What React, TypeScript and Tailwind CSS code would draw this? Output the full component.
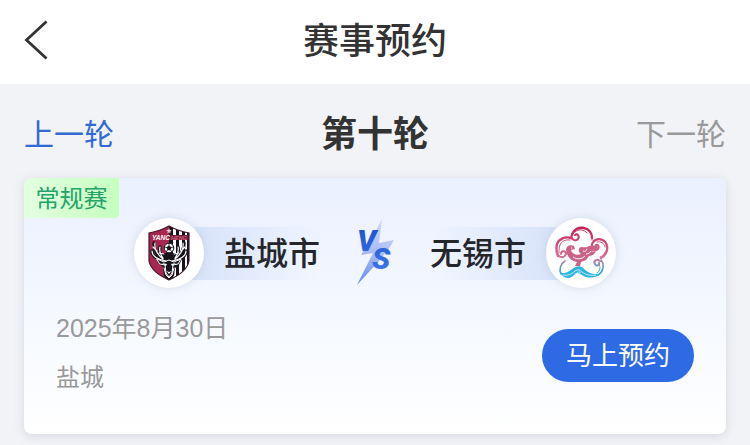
import type { ReactNode } from "react";

function BackIcon() {
  return (
    <svg width="24" height="40" viewBox="0 0 24 40" fill="none" aria-hidden="true">
      <path d="M22.5 1.5 2.5 20l20 18.500" stroke="#333" strokeWidth="2.8" />
    </svg>
  );
}

function YanchengLogo() {
  return (
    <svg width="42" height="56" viewBox="0 0 42 56" role="img" aria-label="盐城市队徽">
      <defs>
        <clipPath id="shield">
          <path d="M1 8Q12 6 21 1q9 5 20 7v28q-2 11-20 19Q3 47 1 36Z" />
        </clipPath>
      </defs>
      <g clipPath="url(#shield)">
        <path fill="#a82750" d="M0 0h21v56H0z" />
        <path fill="#17131a" d="M21 0h21v56H21z" />
        <path fill="#fff" d="M25 3h3v50h-3zM31 5h3v46h-3zM37 7h2v38h-2z" />
        <path fill="#17131a" d="M8 32 12 28h18l5 4-4 8-4 3-1 8-5 5-5-5-1-9-5-4z" />
        <path fill="#6d1c3a" d="M22 10h20v5H22z" />
      </g>
      <path d="M1 8Q12 6 21 1q9 5 20 7v28q-2 11-20 19Q3 47 1 36Z" fill="none" stroke="#42172a" strokeWidth="1.2" />
      <path d="m21 3 .8 2 2.100.1-1.700 1.300.6 2-1.800-1.200-1.800 1.200.6-2L18 5.100l2.200-.1Z" fill="#f7cbd4" />
      <text x="4" y="14.500" fontSize="6.500" fontWeight="700" fontStyle="italic" fontFamily="Liberation Sans, sans-serif" fill="#fff">YANC</text>
      <text x="23" y="14.500" fontSize="5.500" fontWeight="700" fontStyle="italic" fontFamily="Liberation Sans, sans-serif" fill="#d5637f">HENG</text>
      <g fill="none" strokeLinecap="round" strokeLinejoin="round">
        <g stroke="#17131a" strokeWidth="3.400">
          <path d="M17 35C10 34 4 31 4 26M14 34c-5-4-8-9-8-16M14 34c-2-4-3-7-2-12M25 35c7-1 13-4 13-9M28 34c5-4 8-9 8-16M28 34c2-4 3-7 2-12" />
        </g>
        <g stroke="#fff" strokeWidth="1.200">
          <path d="M18 36C10 35 4 31 4 26M15 34c-5-4-9-9-8-16M15 33c-3-4-4-7-3-11M9 26l-4-4M11 28l5 1M24 36c8-1 14-5 14-10M27 34c5-4 9-9 8-16M27 33c3-4 4-7 3-11M33 26l4-4M31 28l-5 1" />
          <path strokeWidth="1" d="m9 34 7 3 5-2 5 2 7-3-3 5-5 1-1 8-3 4-3-4-1-8-5-1Z" />
          <path strokeWidth="1" d="m16 43 2 7 3 3 3-3 2-7" />
        </g>
      </g>
      <circle cx="21" cy="23" r="4.800" fill="#fff" stroke="#17131a" />
      <path d="m21 20.500 2.500 1.800-1 3h-3l-1-3Z" fill="#17131a" />
      <path d="M21 18v3M26 22l-3 .5M24 27l-1.500-2M18 27l1.500-2M16 22l3 .5" stroke="#17131a" strokeWidth=".8" />
      <path d="m14 38 5 1-1 2zM28 38l-5 1 1 2z" fill="#fff" />
      <path d="m18.500 46 2.500 1 2.500-1-2.500 3z" fill="#fff" />
    </svg>
  );
}

function WuxiLogo() {
  return (
    <svg width="56" height="56" viewBox="0 0 56 56" fill="none" role="img" aria-label="无锡市队徽">
      <defs>
        <linearGradient id="cloud" x1="0" y1="2" x2="0" y2="54" gradientUnits="userSpaceOnUse">
          <stop offset="0" stopColor="#c51f54" />
          <stop offset=".55" stopColor="#d76c91" />
          <stop offset=".72" stopColor="#8d8fb4" />
          <stop offset=".84" stopColor="#31a9d5" />
          <stop offset="1" stopColor="#22b5dc" />
        </linearGradient>
      </defs>
      <g stroke="url(#cloud)" strokeLinecap="round" strokeLinejoin="round">
        <path strokeWidth="2.400" d="M19 10C21 4 26 2 31 3c5 1 8 5 8 10" />
        <path strokeWidth="2" d="M19 9c-2 5 3 8 6 5 2-3-1-6-3-4" />
        <path strokeWidth="1" d="M22 7c3-3 9-3 12 1M38 9c1 2 1 4 1 6" />
        <path strokeWidth="2.400" d="M41 16c5-4 12-1 13 5 1 5-2 10-6 12" />
        <path strokeWidth="2" d="M41 16c-4 4-2 9 2 9 4-1 3-6 0-5" />
        <path strokeWidth="1" d="M44 17c4-1 7 1 8 5M52 27c-1 3-3 4-5 5" />
        <path strokeWidth="2.400" d="M18 13C12 11 6 14 4 19c-1 5-1 8 1 12" />
        <path strokeWidth="2" d="M5 30c3 4 8 2 8-2-1-3-5-2-5 1" />
        <path strokeWidth="1" d="M17 15c-5-1-9 2-10 5-1 3-1 5-1 8" />
        <path strokeWidth="1.600" d="M48 35c4 5 2 12-3 15" />
        <path strokeWidth="2" d="M47 36c-3-3-7 0-5 3 1 3 5 1 4-1" />
        <path strokeWidth="1" d="M46 39c2 3 1 7-2 9" />
        <path strokeWidth="1.600" d="M12 36c-5 3-6 9-4 13" />
      </g>
      <path d="M7 47c3 2 8 1 12-3 4-3 8-4 11-1 4 4 9 7 18 6-5 4-13 5-19 1-3-2-5-3-7-1-5 6-12 5-15-2Z" fill="#2db3df" />
      <path d="M10 50c5 1 9-1 12-4 3-2 5-1 7 1 4 3 9 4 14 3M22 50c2-3 4-4 6-2" stroke="#c9f0fa" strokeWidth="1" />
      <path d="M13 25c0-4 4-6 8-4l1 3-4 1c1 4 6 6 10 4-3-2-3-6 0-7 3 0 5 1 8-1 4-1 6 0 9-1 0 4-3 6-7 6 2 1 3 0 5 0-1 3-4 5-7 5l-3 4-5 2-1 4h-5l2-4c-6-1-10-5-11-12Z" fill="#cc6288" />
      <path d="M18 23h1M20 32c4 3 9 2 12-1M30 26c2 1 3 0 4-2M33 29c2 0 4-1 5-3" stroke="#fff" strokeWidth="1" />
    </svg>
  );
}

function VersusMark() {
  return (
    <svg width="44" height="70" viewBox="0 0 44 70" role="img" aria-label="VS">
      <defs>
        <linearGradient id="bolt" x1="30" y1="0" x2="8" y2="68" gradientUnits="userSpaceOnUse">
          <stop offset="0" stopColor="#d3d9fb" />
          <stop offset=".5" stopColor="#a9bbf5" />
          <stop offset="1" stopColor="#668be6" />
        </linearGradient>
        <linearGradient id="versus" x1="0" y1="12" x2="0" y2="52" gradientUnits="userSpaceOnUse">
          <stop offset="0" stopColor="#2156d4" />
          <stop offset="1" stopColor="#3b75e5" />
        </linearGradient>
      </defs>
      <path d="M29 1 20 18 8 37l12-2L4 67l22-24 11-14 4-7-15 3Z" fill="url(#bolt)" />
      <g fontFamily="Roboto, sans-serif" fontSize="30" fontWeight="900" fontStyle="italic" fill="url(#versus)">
        <text x="4" y="33">V</text>
        <text x="19" y="51">S</text>
      </g>
    </svg>
  );
}

function Crest({ children }: { children: ReactNode }) {
  return (
    <div className="z-10 flex size-[70px] shrink-0 items-center justify-center rounded-full bg-white shadow-[0_0_8px_#b8bfd080]">
      {children}
    </div>
  );
}

export default function App() {
  return (
    <main className="min-h-screen bg-[#f1f3f7] pb-3 font-['Liberation_Sans','Noto_Sans_CJK_SC',sans-serif] text-[#333]">
      <header className="grid h-[84px] grid-cols-[1fr_auto_1fr] items-center bg-white px-6">
        <button type="button" aria-label="返回" className="justify-self-start pb-1">
          <BackIcon />
        </button>
        <h1 className="text-[36px] font-medium">赛事预约</h1>
      </header>

      <nav className="grid grid-cols-[1fr_auto_1fr] items-center px-6 pt-[25px] pb-[17px] leading-[52px]">
        <button type="button" className="justify-self-start text-[30px] text-[#3269d4]">上一轮</button>
        <h2 className="text-[36px] font-bold">第十轮</h2>
        <button type="button" className="justify-self-end text-[30px] text-[#999]">下一轮</button>
      </nav>

      <article className="mx-6 overflow-hidden rounded-lg bg-linear-to-b from-[#eaf0fe] via-[#f4f8ff] to-white shadow-[0_2px_10px_#b9bdc680]">
        <span className="flex h-10 w-[95px] items-center justify-center rounded-br-sm bg-linear-to-r from-[#e3ffe1] to-[#c5ffbf] pt-0.5 text-[24px] text-[#22a568]">
          常规赛
        </span>

        <div className="flex items-center justify-center text-[32px] font-medium text-[#24262c]">
          <Crest><YanchengLogo /></Crest>
          <div className="-ml-8 flex h-[53px] items-center bg-linear-to-r from-[#d3e0f9] to-transparent pt-0.5 pl-[52px]">盐城市</div>
          <div className="mx-8 flex w-[46px] justify-center"><VersusMark /></div>
          <div className="-mr-8 flex h-[53px] items-center bg-linear-to-l from-[#d3e0f9] to-transparent pt-0.5 pr-[52px]">无锡市</div>
          <Crest><WuxiLogo /></Crest>
        </div>

        <div className="flex items-end justify-between px-8 pt-4 pb-8">
          <div className="leading-[49px] text-[#999]">
            <p className="text-[25px]"><time dateTime="2025-08-30">2025年8月30日</time></p>
            <p className="text-[24px]">盐城</p>
          </div>
          <button type="button" className="mb-5 h-[53px] rounded-full bg-[#2f6ae5] px-6 pt-0.5 text-[26px] text-white">
            马上预约
          </button>
        </div>
      </article>
    </main>
  );
}
